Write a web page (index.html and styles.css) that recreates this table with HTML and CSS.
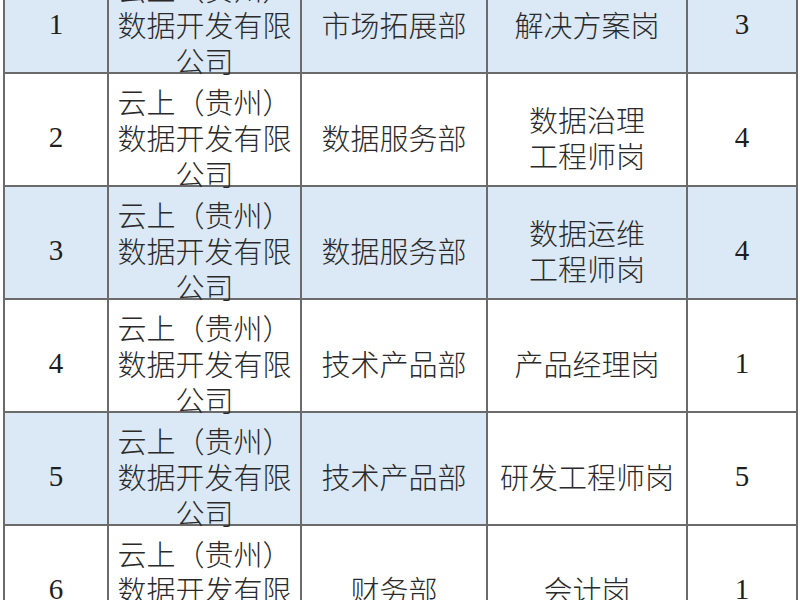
FILE: index.html
```html
<!DOCTYPE html>
<html lang="zh-CN">
<head>
<meta charset="utf-8">
<title>岗位表</title>
<link rel="stylesheet" href="styles.css">
</head>
<body>
<div class="viewport">
<table class="jobs">
  <colgroup>
    <col class="c1"><col class="c2"><col class="c3"><col class="c4"><col class="c5">
  </colgroup>
  <tbody>
    <tr class="blue">
      <td class="num"><div class="cell">1</div></td>
      <td><div class="cell">云上（贵州）<br>数据开发有限<br>公司</div></td>
      <td><div class="cell">市场拓展部</div></td>
      <td><div class="cell">解决方案岗</div></td>
      <td class="num"><div class="cell">3</div></td>
    </tr>
    <tr>
      <td class="num"><div class="cell">2</div></td>
      <td><div class="cell">云上（贵州）<br>数据开发有限<br>公司</div></td>
      <td><div class="cell">数据服务部</div></td>
      <td><div class="cell">数据治理<br>工程师岗</div></td>
      <td class="num"><div class="cell">4</div></td>
    </tr>
    <tr class="blue">
      <td class="num"><div class="cell">3</div></td>
      <td><div class="cell">云上（贵州）<br>数据开发有限<br>公司</div></td>
      <td><div class="cell">数据服务部</div></td>
      <td><div class="cell">数据运维<br>工程师岗</div></td>
      <td class="num"><div class="cell">4</div></td>
    </tr>
    <tr>
      <td class="num"><div class="cell">4</div></td>
      <td><div class="cell">云上（贵州）<br>数据开发有限<br>公司</div></td>
      <td><div class="cell">技术产品部</div></td>
      <td><div class="cell">产品经理岗</div></td>
      <td class="num"><div class="cell">1</div></td>
    </tr>
    <tr>
      <td class="num blue"><div class="cell">5</div></td>
      <td class="blue"><div class="cell">云上（贵州）<br>数据开发有限<br>公司</div></td>
      <td class="blue"><div class="cell">技术产品部</div></td>
      <td><div class="cell">研发工程师岗</div></td>
      <td class="num"><div class="cell">5</div></td>
    </tr>
    <tr>
      <td class="num"><div class="cell">6</div></td>
      <td><div class="cell">云上（贵州）<br>数据开发有限<br>公司</div></td>
      <td><div class="cell">财务部</div></td>
      <td><div class="cell">会计岗</div></td>
      <td class="num"><div class="cell">1</div></td>
    </tr>
  </tbody>
</table>
</div>
</body>
</html>
```

FILE: styles.css
```css
html, body {
  margin: 0;
  padding: 0;
  background: #ffffff;
}

.viewport {
  width: 800px;
  height: 600px;
  overflow: hidden;
}

.jobs {
  border-collapse: collapse;
  table-layout: fixed;
  width: 793px;
  margin: -41px 0 0 3px;
  font-family: "Noto Sans CJK SC", "Liberation Serif", sans-serif;
  font-weight: 300;
  font-size: 29px;
  color: #2a2a2a;
}

.c1 { width: 104px; }
.c2 { width: 193px; }
.c3 { width: 186px; }
.c4 { width: 200px; }
.c5 { width: 110px; }

.jobs td {
  border: 2px solid #6b6b6b;
  height: 111px;
  padding: 0;
  text-align: center;
  vertical-align: top;
  white-space: nowrap;
  background: #ffffff;
}

.cell {
  height: 111px;
  box-sizing: border-box;
  padding-top: 14px;
  display: flex;
  flex-direction: column;
  justify-content: center;
  align-items: center;
  line-height: 36px;
}

.jobs tr.blue td,
.jobs td.blue {
  background: #dbe8f5;
}

.jobs td.num {
  font-family: "Liberation Serif", serif;
  font-weight: 400;
  font-size: 29px;
  color: #1e1e1e;
}
```
